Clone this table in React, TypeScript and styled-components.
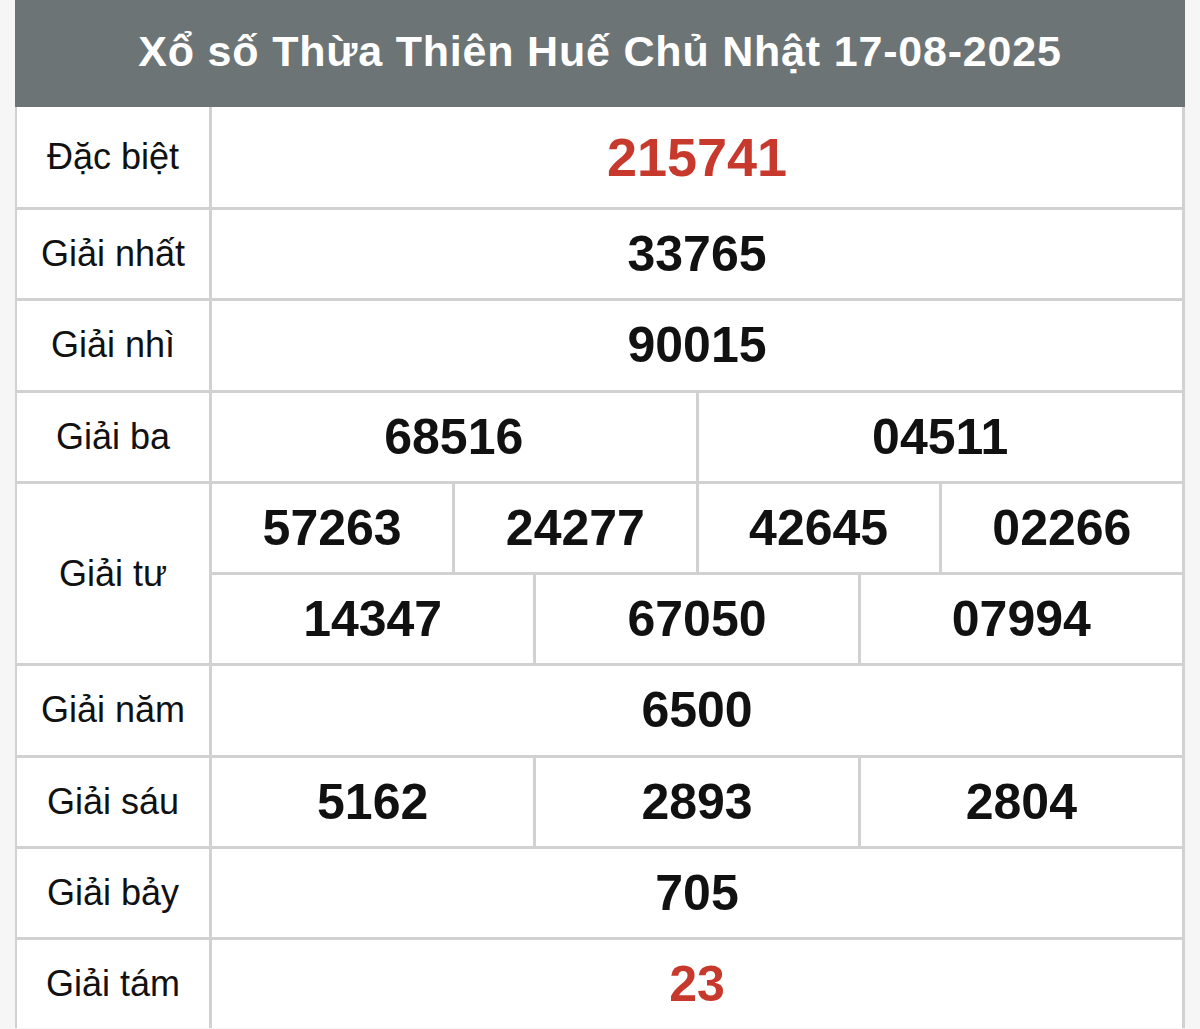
import React from 'react';
import styled, { createGlobalStyle } from 'styled-components';

const GlobalStyle = createGlobalStyle`
  html, body {
    margin: 0;
    padding: 0;
    background: #f6f6f6;
    font-family: "Liberation Sans", Arial, sans-serif;
  }
`;

const BORDER = '#d1d1d1';

interface Prize {
  label: string;
  rows: string[][];
  red?: boolean;
  big?: boolean;
}

const prizes: Prize[] = [
  { label: 'Đặc biệt', rows: [['215741']], red: true, big: true },
  { label: 'Giải nhất', rows: [['33765']] },
  { label: 'Giải nhì', rows: [['90015']] },
  { label: 'Giải ba', rows: [['68516', '04511']] },
  { label: 'Giải tư', rows: [['57263', '24277', '42645', '02266'], ['14347', '67050', '07994']] },
  { label: 'Giải năm', rows: [['6500']] },
  { label: 'Giải sáu', rows: [['5162', '2893', '2804']] },
  { label: 'Giải bảy', rows: [['705']] },
  { label: 'Giải tám', rows: [['23']], red: true },
];

export default function App() {
  return (
    <>
      <GlobalStyle />
      <Board>
        <Title>Xổ số Thừa Thiên Huế Chủ Nhật 17-08-2025</Title>
        <Body>
          {prizes.map((p) => (
            <Row key={p.label}>
              <Label>{p.label}</Label>
              <Values>
                {p.rows.map((nums, i) => (
                  <NumberLine key={i} $count={nums.length} $tall={p.big}>
                    {nums.map((n) => (
                      <Num key={n} $red={p.red} $big={p.big}>
                        {n}
                      </Num>
                    ))}
                  </NumberLine>
                ))}
              </Values>
            </Row>
          ))}
        </Body>
      </Board>
    </>
  );
}

const Board = styled.div`
  margin: 0 15px;
  border-left: 2px solid ${BORDER};
  border-right: 3px solid ${BORDER};
  background: ${BORDER};
`;

const Title = styled.div`
  height: 107px;
  margin: 0 -3px 0 -2px;
  background: #6d7475;
  color: #fff;
  font-weight: 700;
  font-size: 43px;
  letter-spacing: 0.8px;
  display: flex;
  align-items: center;
  justify-content: center;
  padding-bottom: 4px;
  box-sizing: border-box;
`;

const Body = styled.div`
  display: flex;
  flex-direction: column;
  gap: 3px;
`;

const Row = styled.div`
  display: grid;
  grid-template-columns: 192px 1fr;
  gap: 3px;
`;

const Label = styled.div`
  background: #fff;
  color: #111;
  font-size: 36px;
  display: flex;
  align-items: center;
  justify-content: center;
`;

const Values = styled.div`
  display: flex;
  flex-direction: column;
  gap: 3px;
`;

const NumberLine = styled.div<{ $count: number; $tall?: boolean }>`
  display: grid;
  grid-template-columns: repeat(${(p) => p.$count}, 1fr);
  gap: 3px;
  height: ${(p) => (p.$tall ? '100px' : '88.25px')};
`;

const Num = styled.div<{ $red?: boolean; $big?: boolean }>`
  background: #fff;
  color: ${(p) => (p.$red ? '#c8392d' : '#111')};
  font-weight: 700;
  font-size: ${(p) => (p.$big ? '54px' : '50px')};
  display: flex;
  align-items: center;
  justify-content: center;
`;
